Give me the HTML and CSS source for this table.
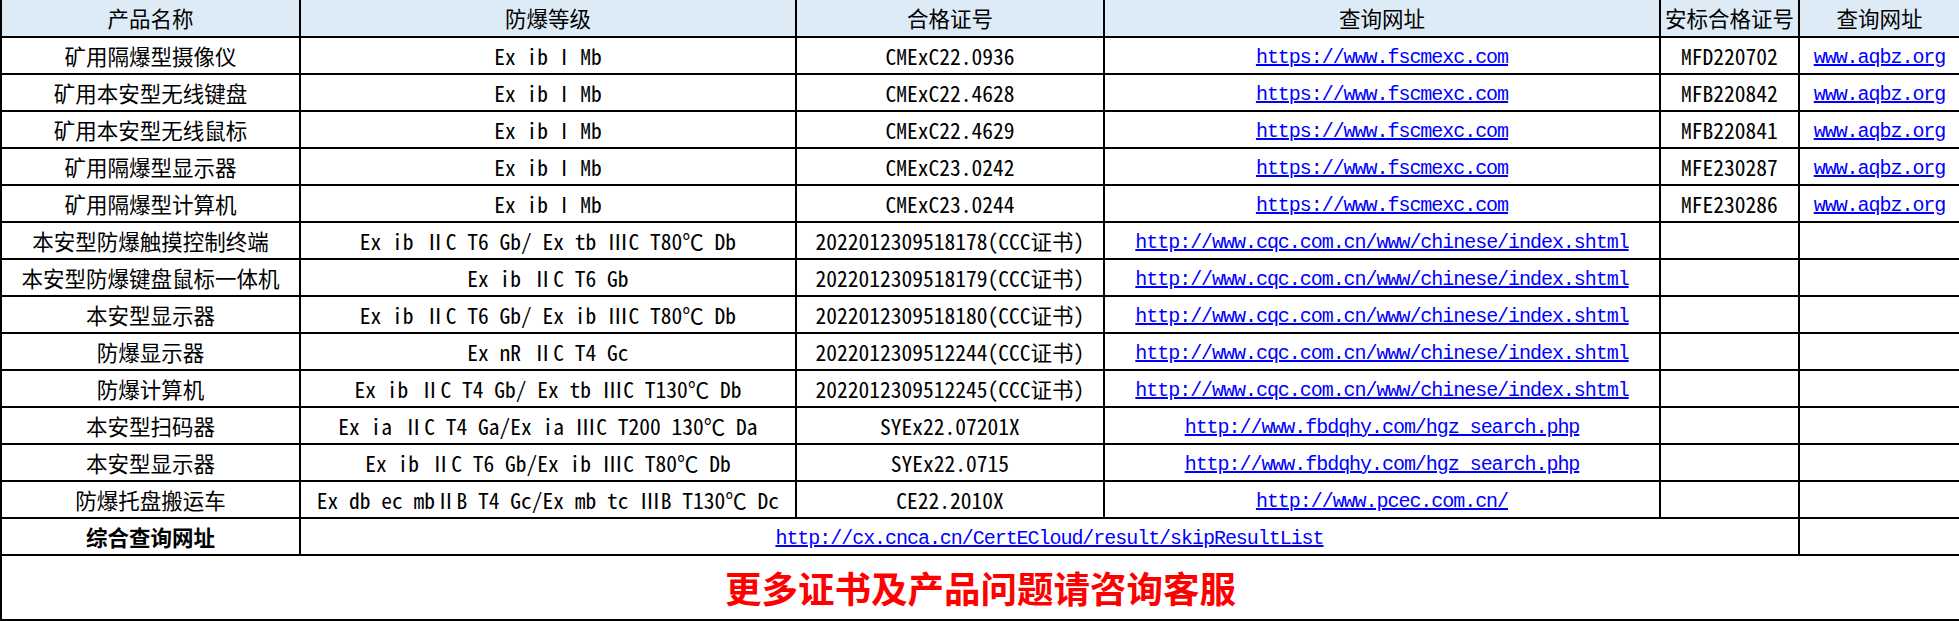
FILE: index.html
```html
<!DOCTYPE html>
<html lang="zh-CN">
<head>
<meta charset="utf-8">
<title>产品证书</title>
<link rel="stylesheet" href="styles.css">
</head>
<body>
<table class="cert">
  <colgroup>
    <col class="c1"><col class="c2"><col class="c3"><col class="c4"><col class="c5"><col class="c6">
  </colgroup>
  <thead>
    <tr class="head">
      <th>产品名称</th><th>防爆等级</th><th>合格证号</th><th>查询网址</th><th>安标合格证号</th><th>查询网址</th>
    </tr>
  </thead>
  <tbody>
    <tr><td>矿用隔爆型摄像仪</td><td>Ex ib <span class="roman">I</span> Mb</td><td>CMExC22.0936</td><td><a class="url" href="#">https://www.fscmexc.com</a></td><td>MFD220702</td><td><a class="url" href="#">www.aqbz.org</a></td></tr>
    <tr><td>矿用本安型无线键盘</td><td>Ex ib <span class="roman">I</span> Mb</td><td>CMExC22.4628</td><td><a class="url" href="#">https://www.fscmexc.com</a></td><td>MFB220842</td><td><a class="url" href="#">www.aqbz.org</a></td></tr>
    <tr><td>矿用本安型无线鼠标</td><td>Ex ib <span class="roman">I</span> Mb</td><td>CMExC22.4629</td><td><a class="url" href="#">https://www.fscmexc.com</a></td><td>MFB220841</td><td><a class="url" href="#">www.aqbz.org</a></td></tr>
    <tr><td>矿用隔爆型显示器</td><td>Ex ib <span class="roman">I</span> Mb</td><td>CMExC23.0242</td><td><a class="url" href="#">https://www.fscmexc.com</a></td><td>MFE230287</td><td><a class="url" href="#">www.aqbz.org</a></td></tr>
    <tr><td>矿用隔爆型计算机</td><td>Ex ib <span class="roman">I</span> Mb</td><td>CMExC23.0244</td><td><a class="url" href="#">https://www.fscmexc.com</a></td><td>MFE230286</td><td><a class="url" href="#">www.aqbz.org</a></td></tr>
    <tr><td>本安型防爆触摸控制终端</td><td>Ex ib ⅡC T6 Gb/ Ex tb ⅢC T80℃ Db</td><td>2022012309518178(CCC证书)</td><td><a class="url" href="#">http://www.cqc.com.cn/www/chinese/index.shtml</a></td><td></td><td></td></tr>
    <tr><td>本安型防爆键盘鼠标一体机</td><td>Ex ib ⅡC T6 Gb</td><td>2022012309518179(CCC证书)</td><td><a class="url" href="#">http://www.cqc.com.cn/www/chinese/index.shtml</a></td><td></td><td></td></tr>
    <tr><td>本安型显示器</td><td>Ex ib ⅡC T6 Gb/ Ex ib ⅢC T80℃ Db</td><td>2022012309518180(CCC证书)</td><td><a class="url" href="#">http://www.cqc.com.cn/www/chinese/index.shtml</a></td><td></td><td></td></tr>
    <tr><td>防爆显示器</td><td>Ex nR ⅡC T4 Gc</td><td>2022012309512244(CCC证书)</td><td><a class="url" href="#">http://www.cqc.com.cn/www/chinese/index.shtml</a></td><td></td><td></td></tr>
    <tr><td>防爆计算机</td><td>Ex ib ⅡC T4 Gb/ Ex tb ⅢC T130℃ Db</td><td>2022012309512245(CCC证书)</td><td><a class="url" href="#">http://www.cqc.com.cn/www/chinese/index.shtml</a></td><td></td><td></td></tr>
    <tr><td>本安型扫码器</td><td>Ex ia ⅡC T4 Ga/Ex ia ⅢC T200 130℃ Da</td><td>SYEx22.07201X</td><td><a class="url" href="#">http://www.fbdqhy.com/hgz_search.php</a></td><td></td><td></td></tr>
    <tr><td>本安型显示器</td><td>Ex ib ⅡC T6 Gb/Ex ib ⅢC T80℃ Db</td><td>SYEx22.0715</td><td><a class="url" href="#">http://www.fbdqhy.com/hgz_search.php</a></td><td></td><td></td></tr>
    <tr><td>防爆托盘搬运车</td><td>Ex db ec mbⅡB T4 Gc/Ex mb tc ⅢB T130℃ Dc</td><td>CE22.2010X</td><td><a class="url" href="#">http://www.pcec.com.cn/</a></td><td></td><td></td></tr>
    <tr><td class="bold">综合查询网址</td><td colspan="4"><a class="url" href="#">http://cx.cnca.cn/CertECloud/result/skipResultList</a></td><td></td></tr>
    <tr class="notice"><td colspan="6">更多证书及产品问题请咨询客服</td></tr>
  </tbody>
</table>
</body>
</html>
```
FILE: styles.css
```css
html, body {
  margin: 0;
  padding: 0;
  background: #ffffff;
}

.cert {
  width: 1959px;
  table-layout: fixed;
  border-collapse: collapse;
  font-family: "Noto Sans Mono CJK SC", "Noto Sans CJK SC", sans-serif;
  font-size: 21.5px;
  color: #000000;
}

.c1 { width: 299px; }
.c2 { width: 496px; }
.c3 { width: 308px; }
.c4 { width: 556px; }
.c5 { width: 139px; }
.c6 { width: 161px; }

.cert th,
.cert td {
  border: 2px solid #000000;
  padding: 0;
  text-align: center;
  vertical-align: middle;
  white-space: nowrap;
  overflow: hidden;
  line-height: 1.2;
}

.cert th {
  font-weight: normal;
  background: #ddebf7;
  border-top: none;
}

.head { height: 37px; }
.cert tbody tr { height: 37px; }

.roman {
  display: inline-block;
  width: 0.5em;
  font-family: "Noto Sans CJK SC", sans-serif;
  text-align: center;
}

.url {
  font-family: "Liberation Mono", monospace;
  font-size: 20px;
  letter-spacing: -1.04px;
  color: #0000ff;
  text-decoration: underline;
}

.bold {
  font-weight: 700;
}

.notice td {
  height: 63px;
  color: #ff0000;
  font-size: 36.5px;
  font-weight: 700;
}
```
